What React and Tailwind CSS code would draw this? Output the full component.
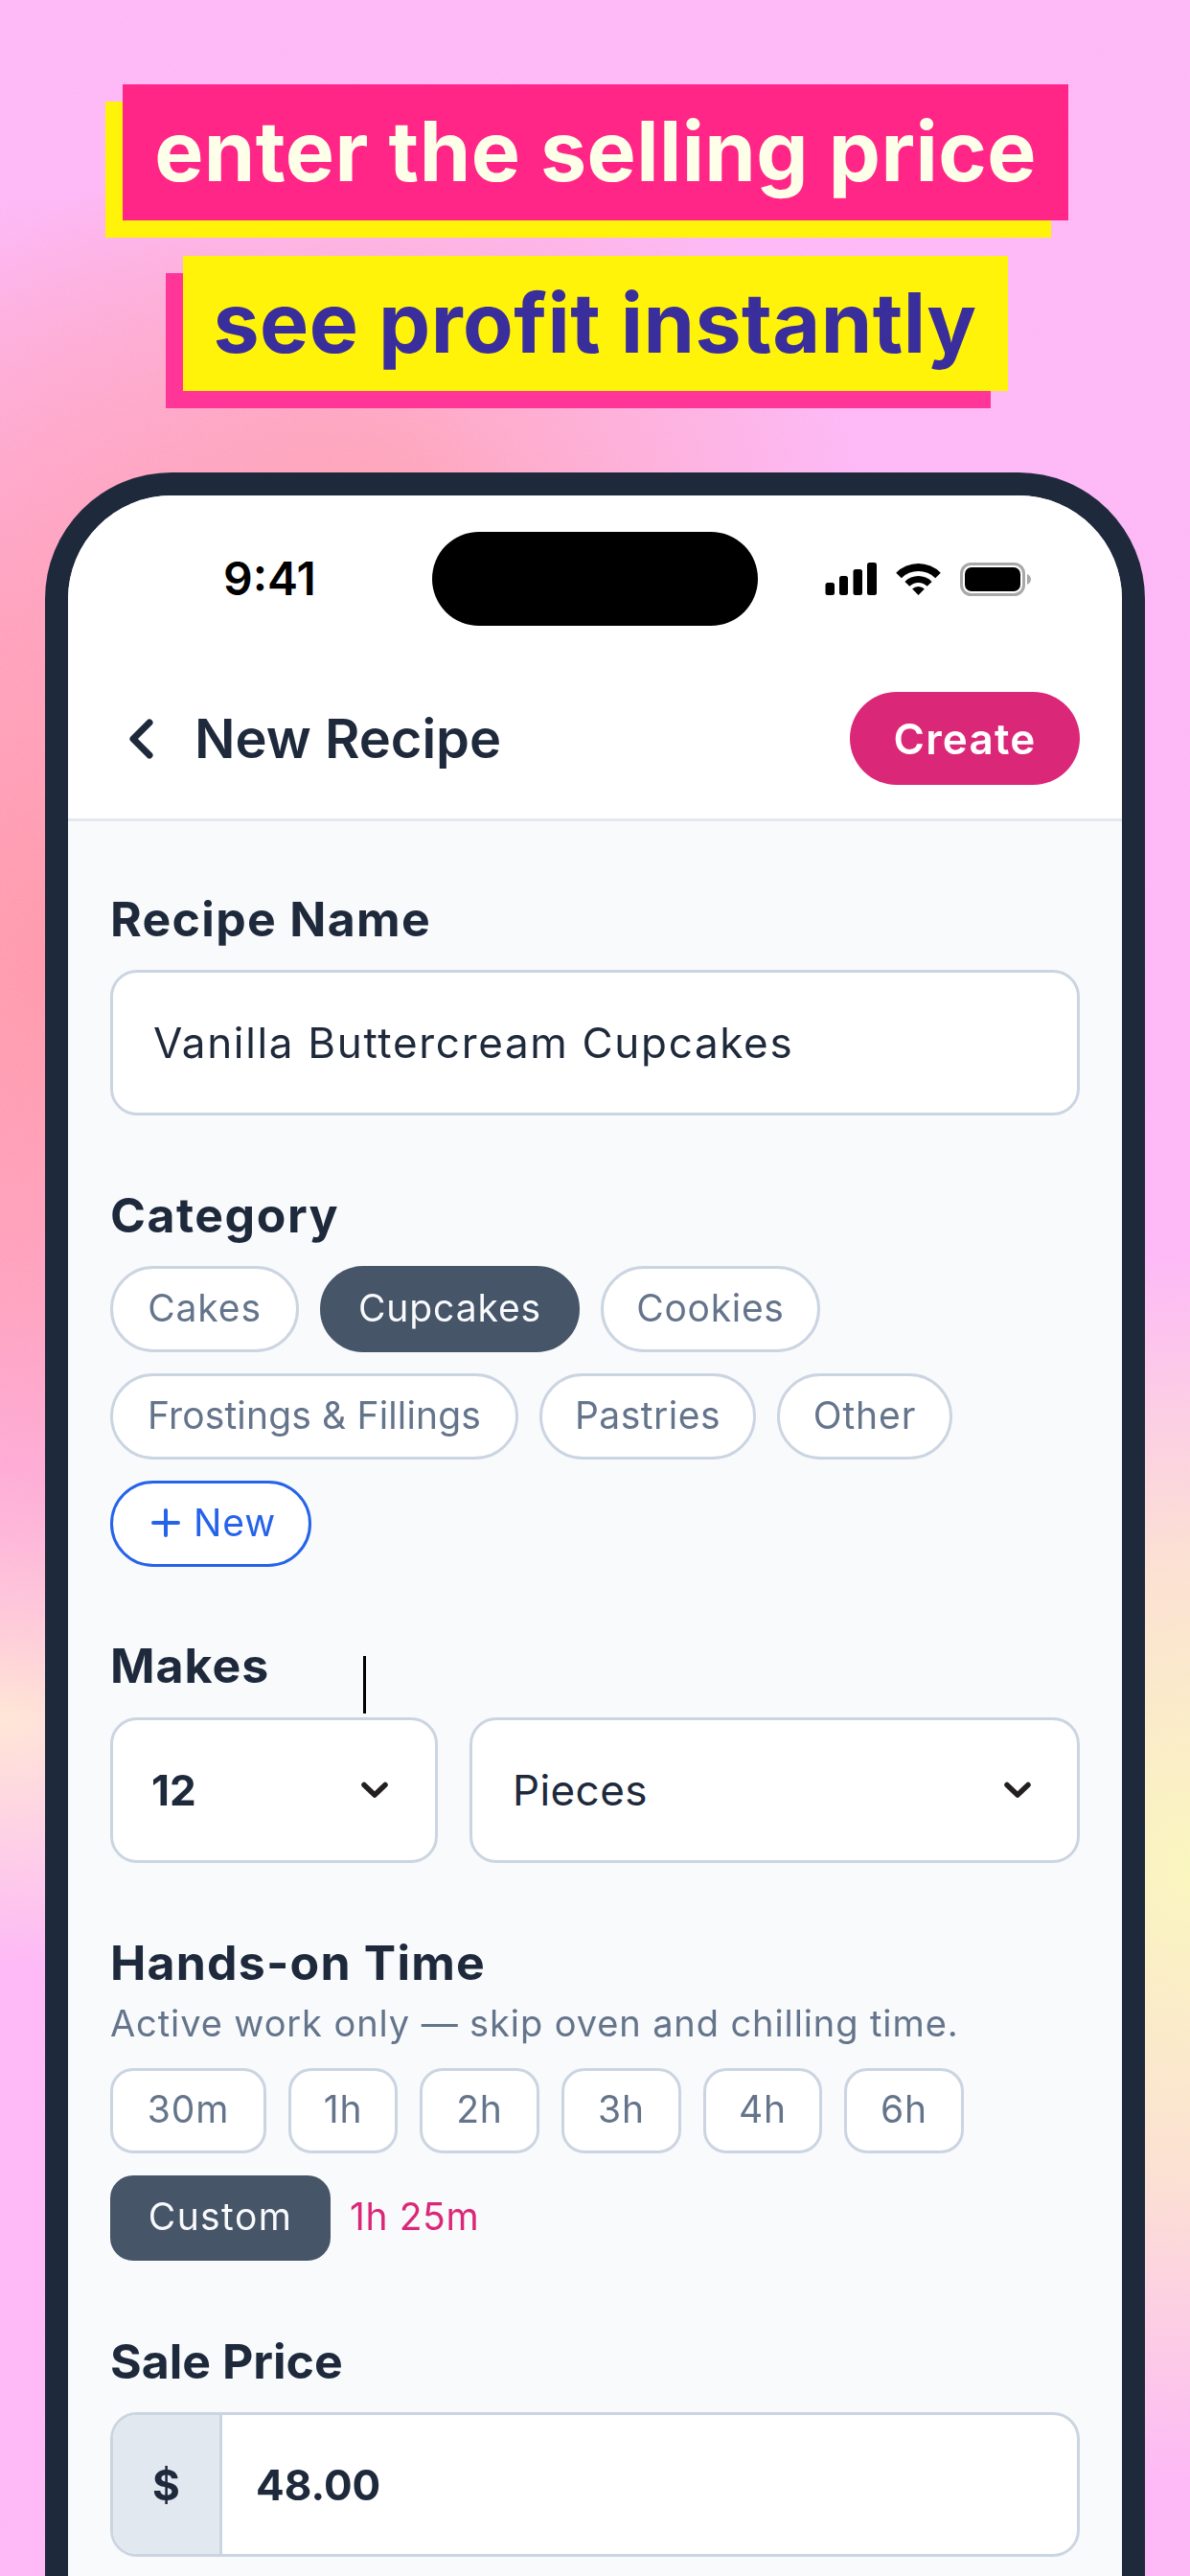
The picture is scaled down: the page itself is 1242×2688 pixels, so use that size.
const sans = "font-['Inter','Liberation_Sans',sans-serif]";

function Label({ className = "", children }) {
  return <h2 className={`h-[56px] text-[50px] leading-[56px] font-[650] text-[#1e293b] ${className}`}>{children}</h2>;
}

function Chip({ w, active, round, className = "tracking-[0.9px]", children }) {
  const shape = round ? "rounded-full h-[90px]" : "rounded-[24px] h-[89px]";
  const tone = active ? "bg-[#475569] border-[#475569] text-[#f8fafc]" : "bg-white border-[#cbd5e1] text-[#64748b]";
  return (
    <div className={`${shape} ${tone} ${className} border-[3px] pb-[2px] flex items-center justify-center text-[39px]`} style={{ width: w }}>
      {children}
    </div>
  );
}

function Chevron() {
  return (
    <svg width="28" height="18" viewBox="0 0 28 18" fill="none" stroke="#231f20" strokeWidth="5.5" strokeLinecap="round" strokeLinejoin="round">
      <path d="M3 3.5 L14 14 L25 3.5" />
    </svg>
  );
}

function StatusIcons() {
  return (
    <div className="flex items-center">
      <svg width="54" height="34" viewBox="0 0 54 34" fill="#000">
        <rect x="0.5" y="21" width="9.5" height="13" rx="2.5" />
        <rect x="15" y="14" width="9" height="20" rx="2.5" />
        <rect x="29.5" y="7" width="9.5" height="27" rx="2.5" />
        <rect x="44" y="0" width="10" height="34" rx="2.5" />
      </svg>
      <svg className="ml-[20px]" width="47" height="34" viewBox="0 0 47 34" fill="#000">
        <path d="M0.2 10.7 A33 33 0 0 1 46.8 10.7 L41.2 16.3 A25 25 0 0 0 5.8 16.3 Z" />
        <path d="M9.4 19.9 A20 20 0 0 1 37.6 19.9 L32.7 24.8 A13 13 0 0 0 14.3 24.8 Z" />
        <path d="M17.1 27.6 A9 9 0 0 1 29.9 27.6 L23.5 34 Z" />
      </svg>
      <svg className="ml-[20px]" width="74" height="35" viewBox="0 0 74 35" fill="none">
        <rect x="1.5" y="1.5" width="65" height="32" rx="10" stroke="#a8a8a8" strokeWidth="3" />
        <rect x="5" y="5" width="58" height="25" rx="7" fill="#000" />
        <path d="M70 12 C72.5 13 74 15 74 17.5 C74 20 72.5 22 70 23 Z" fill="#a8a8a8" />
      </svg>
    </div>
  );
}

export default function App() {
  return (
    <div className={`${sans} relative w-[1242px] h-[2688px] overflow-hidden flex flex-col items-stretch bg-[#fdb6f6] bg-[radial-gradient(ellipse_620px_800px_at_60px_1000px,#ff96a8_0%,#ff9cb4d9_45%,#ff9db800_100%),radial-gradient(ellipse_520px_400px_at_380px_530px,#ff9ea8d9_0%,#ff9ea800_100%),radial-gradient(ellipse_600px_640px_at_1242px_1950px,#faf6bc_0%,#fbeac8cc_50%,#fbe8c800_100%),radial-gradient(ellipse_380px_260px_at_0px_1790px,#ffe6d4_0%,#ffe6d400_100%)]`}>
      <svg className="absolute inset-0 pointer-events-none opacity-[0.22] mix-blend-overlay" width="1242" height="2688">
        <filter id="grain">
          <feTurbulence type="fractalNoise" baseFrequency="0.9" numOctaves="2" stitchTiles="stitch" />
          <feColorMatrix type="saturate" values="0" />
        </filter>
        <rect width="1242" height="2688" filter="url(#grain)" />
      </svg>

      <header className="relative flex flex-col items-center pt-[88px]">
        <div className="ml-[1px] w-[987px] h-[142px] pb-[2px] flex items-center justify-center bg-[#ff2687] shadow-[-18px_18px_0_#fff30a] text-[#fdffe8] text-[86px] font-bold tracking-[0.4px] leading-none">
          enter the selling price
        </div>
        <div className="mt-[37px] w-[861px] h-[141px] pb-[2px] flex items-center justify-center bg-[#fff30a] shadow-[-18px_18px_0_#ff3598] text-[#3a2e9c] text-[86px] font-bold tracking-[0.4px] leading-none">
          see profit instantly
        </div>
      </header>

      <div className="relative mt-[85px] mx-[47px] flex-1 rounded-t-[132px] border-x-[24px] border-t-[24px] border-[#1e293b] bg-[#f8fafc] overflow-hidden">
        <div className="bg-white border-b-[3px] border-[#e2e8f0]">
          <div className="pt-[38px] flex items-start">
            <div className="w-[380px] h-[98px] pl-[162px] flex items-center">
              <span className="text-[48px] font-semibold text-black leading-none">9:41</span>
            </div>
            <div className="w-[340px] h-[98px] rounded-full bg-black" />
            <div className="h-[98px] pl-[70px] flex items-center">
              <StatusIcons />
            </div>
          </div>
          <div className="mt-[69px] pb-[35px] pl-[64px] pr-[44px] flex items-center justify-between">
            <div className="flex items-center">
              <svg width="25" height="42" viewBox="0 0 25 42" fill="none" stroke="#1e293b" strokeWidth="7" strokeLinecap="round" strokeLinejoin="round">
                <path d="M21 4 L4 21 L21 38" />
              </svg>
              <h1 className="ml-[43px] text-[56px] font-semibold text-[#1e293b] leading-none">New Recipe</h1>
            </div>
            <button className="w-[240px] h-[97px] rounded-full bg-[#db2777] text-white text-[44px] font-semibold tracking-[1.2px]">Create</button>
          </div>
        </div>

        <div className="px-[44px] pt-[73px]">
          <section>
            <Label className="pt-[1px] tracking-[1.3px]">Recipe Name</Label>
            <div className="mt-[26px] h-[152px] rounded-[28px] border-[3px] border-[#cbd5e1] bg-white flex items-center pl-[42px] text-[44px] text-[#1e293b] tracking-[1.67px]">
              Vanilla Buttercream Cupcakes
            </div>
          </section>

          <section className="mt-[75px]">
            <Label className="pt-[1px] tracking-[1.5px]">Category</Label>
            <div className="mt-[26px] flex flex-wrap gap-x-[22px] gap-y-[22px]">
              <Chip round w={197}>Cakes</Chip>
              <Chip round active w={271}>Cupcakes</Chip>
              <Chip round w={229} className="tracking-[0.7px]">Cookies</Chip>
              <Chip round w={426} className="tracking-[0.15px]">Frostings &amp; Fillings</Chip>
              <Chip round w={226} className="tracking-[0.5px]">Pastries</Chip>
              <Chip round w={183}>Other</Chip>
              <div className="w-[210px] h-[90px] pl-[6px] pb-[2px] rounded-full border-[3px] border-[#2563eb] bg-white flex items-center justify-center text-[39px] text-[#2563eb] tracking-[0.9px]">
                <svg className="mr-[14px]" width="30" height="30" viewBox="0 0 30 30" fill="none" stroke="#2563eb" strokeWidth="4" strokeLinecap="round">
                  <path d="M15 2 V28 M2 15 H28" />
                </svg>
                New
              </div>
            </div>
          </section>

          <section className="relative mt-[74px]">
            <Label className="pt-[1px] tracking-[1px]">Makes</Label>
            <div className="absolute left-[264px] top-[19px] w-[3px] h-[60px] bg-black" />
            <div className="mt-[27px] flex gap-[33px]">
              <div className="w-[342px] h-[152px] rounded-[28px] border-[3px] border-[#cbd5e1] bg-white flex items-center justify-between pl-[40px] pr-[49px] text-[44px] font-bold text-[#1e293b]">
                12
                <Chevron />
              </div>
              <div className="flex-1 h-[152px] rounded-[28px] border-[3px] border-[#cbd5e1] bg-white flex items-center justify-between pl-[42px] pr-[48px] text-[44px] text-[#1e293b] tracking-[0.4px]">
                Pieces
                <Chevron />
              </div>
            </div>
          </section>

          <section className="mt-[75px]">
            <Label className="pt-[1px] tracking-[1.2px]">Hands-on Time</Label>
            <p className="mt-[12px] h-[48px] text-[38px] leading-[48px] text-[#64748b] tracking-[0.9px] whitespace-nowrap">Active work only — skip oven and chilling time.</p>
            <div className="mt-[23px] flex flex-wrap items-center gap-x-[23px] gap-y-[23px]">
              <Chip w={163}>30m</Chip>
              <Chip w={114}>1h</Chip>
              <Chip w={125}>2h</Chip>
              <Chip w={125}>3h</Chip>
              <Chip w={124}>4h</Chip>
              <Chip w={125}>6h</Chip>
              <Chip active w={230} className="tracking-[1.4px]">Custom</Chip>
              <span className="-ml-[3px] pb-[2px] text-[39px] text-[#db2777] tracking-[0.6px]">1h 25m</span>
            </div>
          </section>

          <section className="mt-[76px]">
            <Label className="pt-[1px]">Sale Price</Label>
            <div className="mt-[26px] h-[151px] rounded-[28px] border-[3px] border-[#cbd5e1] bg-white overflow-hidden flex items-stretch">
              <div className="w-[114px] bg-[#e2e8f0] border-r-[3px] border-[#cbd5e1] flex items-center justify-center text-[44px] font-bold text-[#1e293b]">$</div>
              <div className="flex items-center pl-[35px] text-[44px] font-bold text-[#1e293b]">48.00</div>
            </div>
          </section>
        </div>
      </div>
    </div>
  );
}
